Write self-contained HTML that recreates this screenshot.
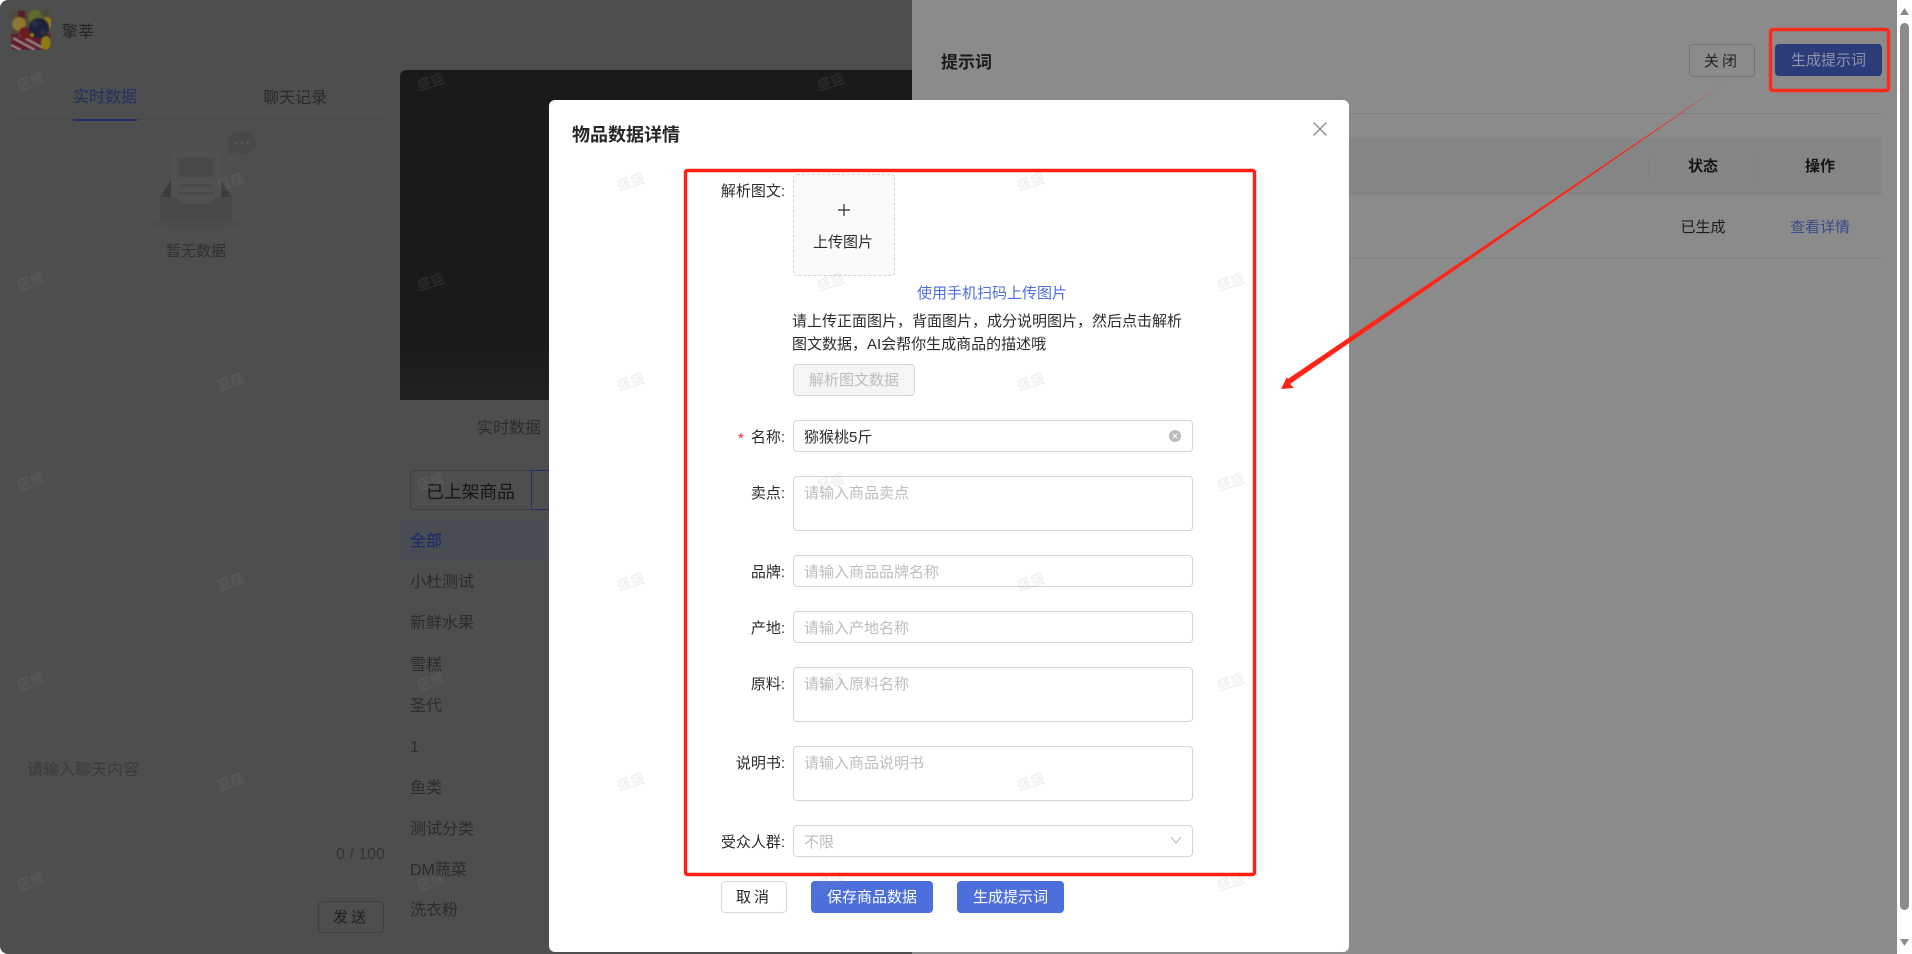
<!DOCTYPE html>
<html lang="zh">
<head>
<meta charset="utf-8">
<title>物品数据详情</title>
<style>
html,body{margin:0;padding:0;width:1912px;height:954px;overflow:hidden;background:#fff}
body{position:relative;font-family:"Liberation Sans","Noto Sans CJK SC",sans-serif;font-size:15px}
.a{position:absolute;box-sizing:border-box;white-space:nowrap}
.t{position:absolute;white-space:nowrap;line-height:24px;height:24px;margin-top:1.5px}
.tr{text-align:right}
.tc{text-align:center}
.inp{position:absolute;left:793px;width:400px;box-sizing:border-box;border:1px solid #d4d4d4;border-radius:4px;background:#fff}
.ph{position:absolute;left:804px;color:#bdbdbd;font-size:15px;line-height:24px;height:24px;white-space:nowrap;margin-top:1.5px}
.lb{position:absolute;right:1127px;color:#2c2c2c;font-size:15px;line-height:24px;height:24px;white-space:nowrap;margin-top:1.5px}
.cat{position:absolute;left:410px;color:#2b2c2c;font-size:16px;line-height:24px;height:24px;white-space:nowrap;margin-top:1.2px}
.btn{position:absolute;box-sizing:border-box;border-radius:4px;text-align:center;font-size:15px;white-space:nowrap;padding-top:1px}
</style>
</head>
<body>
<!-- left page -->
<div class="a" style="left:0;top:0;width:912px;height:954px;background:#4d4e4e;border-radius:8px 0 0 8px"></div>
<svg class="a" style="left:11px;top:10px;border-radius:3px" width="40" height="40" viewBox="0 0 40 40">
<g style="filter:blur(.7px)">
<rect width="40" height="40" fill="#4f4a3c"/>
<circle cx="24" cy="7" r="7" fill="#5f6a2a"/>
<rect x="7" y="1" width="7" height="7" fill="#5a1a28"/>
<circle cx="8" cy="14" r="7" fill="#8c7a30"/>
<circle cx="36" cy="13" r="6" fill="#94781c"/>
<rect x="0" y="24" width="40" height="16" fill="#5e1c2a"/>
<path d="M2 28L24 40M8 25L32 38M0 35L10 40" stroke="#9c8c8c" stroke-width="2.2" fill="none"/>
<circle cx="14" cy="23" r="6" fill="#6e1c24"/>
<circle cx="28" cy="18" r="10" fill="#1e2238"/>
<circle cx="24" cy="14" r="3" fill="#2c3048"/>
<circle cx="32" cy="22" r="3" fill="#2c3048"/>
<ellipse cx="35" cy="33" rx="5" ry="7" fill="#8c7c14"/>
<circle cx="21" cy="25" r="2" fill="#948012"/>
</g>
</svg>
<div class="t" style="left:62px;top:19px;font-size:16px;color:#262626">擎莘</div>
<div class="a" style="left:10px;top:70px;width:380px;height:50px;border-bottom:1px solid #484949"></div>
<div class="t" style="left:73px;top:84px;font-size:16px;color:#23305f">实时数据</div>
<div class="a" style="left:73px;top:119px;width:64px;height:2px;background:#1f2f66"></div>
<div class="t" style="left:263px;top:85px;font-size:16px;color:#2a2a2a">聊天记录</div>
<!-- empty icon -->
<svg class="a" style="left:150px;top:125px" width="115" height="115" viewBox="0 0 115 115">
<ellipse cx="46" cy="99" rx="46" ry="5" fill="#4b4c4c"/>
<path d="M10 72L21 55V72Z" fill="#3c3d3f"/>
<path d="M82 72L71 55V72Z" fill="#3c3d3f"/>
<rect x="21" y="27" width="50" height="53" fill="#4f5050"/>
<rect x="28" y="33" width="36" height="19" fill="#48494b"/>
<rect x="28" y="59" width="36" height="3" fill="#48494b"/>
<rect x="28" y="67" width="36" height="3" fill="#48494b"/>
<path d="M10 72H26L32 79H60L66 72H82V92a4 4 0 0 1-4 4H14a4 4 0 0 1-4-4Z" fill="#47484a"/>
<path d="M92 6c8 0 14 5 14 11s-6 12-14 12c-3 0-6-1-8-2l-6 3 2-7c-1-2-2-4-2-6 0-6 6-11 14-11z" fill="#47484a"/>
<circle cx="86" cy="18" r="1.5" fill="#565658"/><circle cx="92" cy="18" r="1.5" fill="#565658"/><circle cx="98" cy="18" r="1.5" fill="#565658"/>
</svg>
<div class="t" style="left:166px;top:238px;font-size:15px;color:#303030">暂无数据</div>
<div class="a" style="left:10px;top:747px;width:380px;height:1px;background:#4a4b4b"></div>
<div class="t" style="left:27px;top:757px;font-size:16px;color:#3b3b3b">请输入聊天内容</div>
<div class="t" style="left:336px;top:841px;font-size:16px;color:#333">0 / 100</div>
<div class="btn" style="left:318px;top:901px;width:66px;height:32px;border:1px solid #3f4040;line-height:30px;color:#1e1e1e;letter-spacing:3px">发送</div>

<!-- center -->
<div class="a" style="left:400px;top:70px;width:512px;height:330px;border-radius:6px 0 0 0;background:linear-gradient(#1a1a1a 0,#1a1a1a 82%,#212121 100%)"></div>
<div class="t" style="left:477px;top:415px;font-size:16px;color:#2c2c2c">实时数据</div>
<div class="a" style="left:410px;top:470px;width:122px;height:40px;border:1px solid #3e3f3f;border-radius:4px 0 0 4px"></div>
<div class="a" style="left:531px;top:470px;width:40px;height:40px;border:1px solid #24306a"></div>
<div class="t" style="left:426px;top:478px;font-size:17.8px;color:#151515">已上架商品</div>
<div class="a" style="left:400px;top:519px;width:512px;height:42px;background:#4a4c54"></div>
<div class="cat" style="top:529px;color:#1f2d66;font-weight:500">全部</div>
<div class="cat" style="top:570px">小杜测试</div>
<div class="cat" style="top:611px">新鲜水果</div>
<div class="cat" style="top:653px">雪糕</div>
<div class="cat" style="top:694px">圣代</div>
<div class="cat" style="top:735px">1</div>
<div class="cat" style="top:776px">鱼类</div>
<div class="cat" style="top:817px">测试分类</div>
<div class="cat" style="top:858px">DM蔬菜</div>
<div class="cat" style="top:898px">洗衣粉</div>

<!-- drawer -->
<div class="a" style="left:912px;top:0;width:985px;height:954px;background:#8b8b8b"></div>
<div class="t" style="left:941px;top:49px;font-size:17px;font-weight:700;color:#1a1a1a">提示词</div>
<div class="btn" style="left:1689px;top:44px;width:66px;height:33px;border:1px solid #747474;line-height:31px;color:#222;letter-spacing:3px">关闭</div>
<div class="btn" style="left:1775px;top:44px;width:107px;height:32px;background:#2c3c7a;line-height:32px;color:#8f94ab">生成提示词</div>
<div class="a" style="left:1349px;top:113px;width:533px;height:1px;background:#808080"></div>
<div class="a" style="left:1349px;top:138px;width:533px;height:56px;background:#858585;border-bottom:1px solid #808080"></div>
<div class="a" style="left:1648px;top:155px;width:1px;height:23px;background:#808080"></div>
<div class="a" style="left:1757px;top:155px;width:1px;height:23px;background:#808080"></div>
<div class="t tc" style="left:1648px;width:110px;top:153px;font-size:15px;font-weight:700;color:#141414">状态</div>
<div class="t tc" style="left:1765px;width:110px;top:153px;font-size:15px;font-weight:700;color:#141414">操作</div>
<div class="t tc" style="left:1648px;width:110px;top:214px;font-size:15px;color:#1c1c1c">已生成</div>
<div class="t tc" style="left:1765px;width:110px;top:214px;font-size:15px;color:#3b4a8d">查看详情</div>
<div class="a" style="left:1349px;top:258px;width:533px;height:1px;background:#808080"></div>

<!-- scrollbar -->
<div class="a" style="left:1897px;top:0;width:15px;height:954px;background:#fff;border-radius:0 8px 8px 0"></div>
<svg class="a" style="left:1897px;top:0" width="15" height="954" viewBox="0 0 15 954">
<path d="M3 15L7.5 8L12 15Z" fill="#8b8b8b"/>
<rect x="3" y="23" width="9" height="887" rx="4.5" fill="#8b8b8b"/>
<path d="M3 939H12L7.5 946Z" fill="#8b8b8b"/>
</svg>

<!-- dialog -->
<div class="a" style="left:549px;top:100px;width:800px;height:852px;background:#fff;border-radius:6px"></div>
<div class="t" style="left:572px;top:121px;font-size:18px;font-weight:700;color:#262626">物品数据详情</div>
<svg class="a" style="left:1313px;top:122px" width="14" height="14" viewBox="0 0 14 14"><path d="M0.5 0.5L13.5 13.5M13.5 0.5L0.5 13.5" stroke="#8a8a8a" stroke-width="1.3" fill="none"/></svg>

<div class="lb" style="top:178px">解析图文:</div>
<div class="a" style="left:793px;top:174px;width:102px;height:102px;background:#fafafa;border:1px dashed #d4d4d4;border-radius:4px"></div>
<svg class="a" style="left:838px;top:204px" width="12" height="12" viewBox="0 0 12 12"><path d="M6 0V12M0 6H12" stroke="#2a2a2a" stroke-width="1.2" fill="none"/></svg>
<div class="t tc" style="left:792px;width:102px;top:229px;font-size:15px;color:#2c2c2c">上传图片</div>
<div class="t" style="left:917px;top:280px;font-size:15px;color:#4c6fdc">使用手机扫码上传图片</div>
<div class="t" style="left:792px;top:308px;font-size:15px;color:#2c2c2c">请上传正面图片，背面图片，成分说明图片，然后点击解析</div>
<div class="t" style="left:792px;top:331px;font-size:15px;color:#2c2c2c">图文数据，AI会帮你生成商品的描述哦</div>
<div class="btn" style="left:793px;top:364px;width:122px;height:32px;background:#f5f5f5;border:1px solid #d9d9d9;line-height:30px;color:#bcbcbc">解析图文数据</div>

<div class="t" style="left:738px;top:425px;font-size:15px;color:#f5222d">*</div>
<div class="lb" style="top:424px">名称:</div>
<div class="inp" style="top:420px;height:32px"></div>
<div class="ph" style="top:424px;color:#2c2c2c">猕猴桃5斤</div>
<svg class="a" style="left:1169px;top:430px" width="12" height="12" viewBox="0 0 12 12"><circle cx="6" cy="6" r="6" fill="#bcbcbc"/><path d="M4 4L8 8M8 4L4 8" stroke="#fff" stroke-width="1" fill="none"/></svg>

<div class="lb" style="top:480px">卖点:</div>
<div class="inp" style="top:476px;height:55px"></div>
<div class="ph" style="top:480px">请输入商品卖点</div>

<div class="lb" style="top:559px">品牌:</div>
<div class="inp" style="top:555px;height:32px"></div>
<div class="ph" style="top:559px">请输入商品品牌名称</div>

<div class="lb" style="top:615px">产地:</div>
<div class="inp" style="top:611px;height:32px"></div>
<div class="ph" style="top:615px">请输入产地名称</div>

<div class="lb" style="top:671px">原料:</div>
<div class="inp" style="top:667px;height:55px"></div>
<div class="ph" style="top:671px">请输入原料名称</div>

<div class="lb" style="top:750px">说明书:</div>
<div class="inp" style="top:746px;height:55px"></div>
<div class="ph" style="top:750px">请输入商品说明书</div>

<div class="lb" style="top:829px">受众人群:</div>
<div class="inp" style="top:825px;height:32px"></div>
<div class="ph" style="top:829px">不限</div>
<svg class="a" style="left:1170px;top:836px" width="12" height="8" viewBox="0 0 12 8"><path d="M1 1L6 7L11 1" stroke="#bcbcbc" stroke-width="1.1" fill="none"/></svg>

<div class="btn" style="left:721px;top:881px;width:66px;height:32px;border:1px solid #d9d9d9;background:#fff;line-height:30px;color:#262626;letter-spacing:3px">取消</div>
<div class="btn" style="left:811px;top:881px;width:122px;height:32px;background:#4c6fdc;line-height:32px;color:#fff">保存商品数据</div>
<div class="btn" style="left:957px;top:881px;width:107px;height:32px;background:#4c6fdc;line-height:32px;color:#fff">生成提示词</div>

<!-- watermark -->
<svg class="a" style="left:0;top:0;pointer-events:none" width="1912" height="954" viewBox="0 0 1912 954">
<defs>
<pattern id="wm" x="0" y="0" width="400" height="200" patternUnits="userSpaceOnUse">
<text x="31" y="83" text-anchor="middle" dominant-baseline="middle" transform="rotate(-18 31 83)" font-family="Liberation Sans, Noto Sans CJK SC, sans-serif" font-size="14" fill="rgba(150,150,150,.17)">盛盛</text>
<text x="231" y="183" text-anchor="middle" dominant-baseline="middle" transform="rotate(-18 231 183)" font-family="Liberation Sans, Noto Sans CJK SC, sans-serif" font-size="14" fill="rgba(150,150,150,.17)">盛盛</text>
</pattern>
</defs>
<rect width="1897" height="954" fill="url(#wm)"/>
</svg>

<!-- annotations -->
<svg class="a" style="left:0;top:0;pointer-events:none" width="1912" height="954" viewBox="0 0 1912 954">
<rect x="685.5" y="170.5" width="569" height="704" rx="2" fill="none" stroke="#ff1f14" stroke-width="3.4"/>
<rect x="1770.5" y="29.5" width="118" height="61" rx="2" fill="none" stroke="#ff2a1c" stroke-width="3.4"/>
<path d="M1725 83L1290 384L1287 379.5Z" fill="#ff2415"/>
<path d="M1281 389L1287 377L1289 381L1291 385L1294 388Z" fill="#ff2415"/>
</svg>
</body>
</html>
